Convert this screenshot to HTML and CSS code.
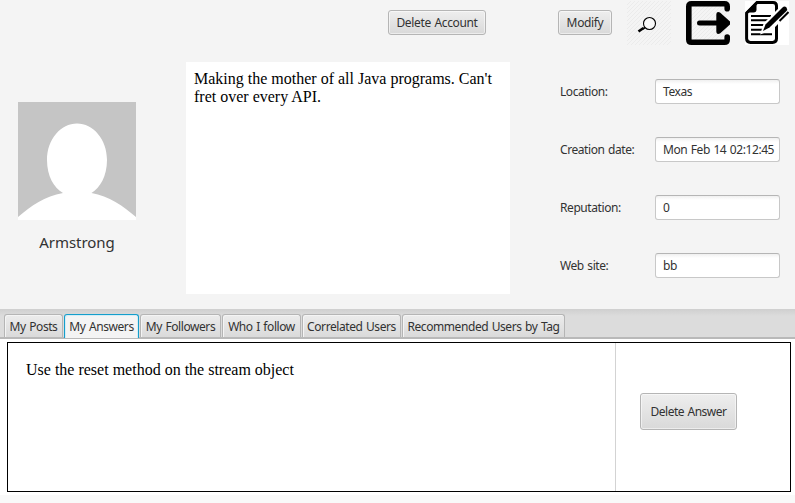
FILE: index.html
```html
<!DOCTYPE html>
<html lang="en">
<head>
<meta charset="utf-8">
<title>Profile</title>
<link rel="stylesheet" href="styles.css">
</head>
<body>
<header class="toolbar">
  <button class="btn delete-account"><span>Delete Account</span></button>
  <button class="btn modify"><span>Modify</span></button>
  <div class="icons">
    <svg class="icon" viewBox="0 0 44 44">
      <defs><pattern id="hatch" width="4" height="4" patternUnits="userSpaceOnUse"><path d="M-1 5L5-1" stroke="#ebebeb" stroke-width="1"/></pattern></defs>
      <rect width="44" height="44" fill="url(#hatch)"/>
      <circle cx="22.5" cy="22.5" r="6" fill="#f8f8f8" stroke="#000" stroke-width="1.1"/>
      <path d="M18 26.500L16 28" stroke="#000" stroke-width="1.6"/>
      <path d="M16.500 27L11.500 30.500" stroke="#000" stroke-width="2.600"/>
    </svg>
    <svg class="icon" viewBox="0 0 44 44">
      <rect x="3" y="3" width="38" height="38" fill="url(#hatch)"/>
      <path d="M41.200 7.800V5.500Q41.200 2.800 38.500 2.800H5.500Q2.800 2.800 2.800 5.500V38.500Q2.800 41.200 5.500 41.200H38.500Q41.200 41.200 41.200 38.500V36" fill="none" stroke="#000" stroke-width="5.600" stroke-linecap="round"/>
      <path d="M13.500 22H33" stroke="#000" stroke-width="5" stroke-linecap="round"/>
      <path d="M30.300 14Q30.300 9.800 34 11.500L44 20.500V23.500L34 32.500Q30.300 34.200 30.300 30Z"/>
    </svg>
    <svg class="icon" viewBox="0 0 44 44">
      <rect width="44" height="44" fill="#fff"/>
      <path d="M12 1.500H28Q31.500 1.500 31.500 5V37.500Q31.500 41.400 27.500 41.400H5.500Q1.600 41.400 1.600 37.500V12Z" fill="#fff" stroke="#000" stroke-width="3"/>
      <path d="M.5 11.500L11.500 .5V8.500Q11.500 11.500 8.500 11.500Z"/>
      <path d="M6 15H26M6 19.300H24M6 24H20M6 28.700H19M6 33.300H27" stroke="#000" stroke-width="1.900"/>
      <path d="M17.500 31L20 23L37 6L43 11L26 28Z" fill="#fff" stroke="#fff" stroke-width="3"/>
      <path d="M18 30L20.500 23.500L37.500 6.500Q39.500 4.500 41.500 6.500Q43 8.500 41 10.500L24.500 26.500Z"/>
      <path d="M34.500 20L43.500 11" stroke="#000" stroke-width="2"/>
    </svg>
  </div>
</header>
<main class="profile">
  <section class="identity">
    <svg class="avatar" viewBox="0 0 118 118">
      <rect width="118" height="118" fill="#c5c5c5"/>
      <path d="M59 21.500C75 21.500 89 37 89 58C89 74 82 86 73.500 91C91 94 105 104 118 115V118H0V115C13 104 27 94 45 91C36 86 29 74 29 58C29 37 43 21.500 59 21.500Z" fill="#fff"/>
    </svg>
    <div class="name"><span>Armstrong</span></div>
  </section>
  <section class="about">Making the mother of all Java programs. Can't fret over every API.</section>
  <section class="details">
    <label>Location:</label><div class="field">Texas</div>
    <label>Creation date:</label><div class="field date">Mon Feb 14 02:12:45</div>
    <label>Reputation:</label><div class="field">0</div>
    <label>Web site:</label><div class="field">bb</div>
  </section>
</main>
<nav class="tabs">
  <div class="tab t1"><span>My Posts</span></div>
  <div class="tab t2 active"><span>My Answers</span></div>
  <div class="tab t3"><span>My Followers</span></div>
  <div class="tab t4"><span>Who I follow</span></div>
  <div class="tab t5"><span>Correlated Users</span></div>
  <div class="tab t6"><span>Recommended Users by Tag</span></div>
</nav>
<section class="panel">
  <article class="answer">
    <p class="text">Use the reset method on the stream object</p>
    <div class="actions"><button class="btn delete-answer"><span>Delete Answer</span></button></div>
  </article>
</section>
</body>
</html>
```
FILE: styles.css
```css
* { box-sizing: border-box; }
body {
  margin: 0;
  width: 795px;
  height: 503px;
  overflow: hidden;
  background: #f9f9f9;
  color: #323232;
  font: 12px/16px "Noto Sans", "Open Sans", sans-serif;
  letter-spacing: -0.42px;
  word-spacing: 0.8px;
  white-space: nowrap;
}
.toolbar {
  display: flex;
  height: 62px;
  padding-left: 388px;
  background: #f4f4f4;
}
.btn {
  display: flex;
  align-items: center;
  justify-content: center;
  height: 25px;
  padding: 0;
  border: 1px solid #b5b5b5;
  border-radius: 3px;
  background: linear-gradient(#eeeeee, #d9d9d9);
  box-shadow: inset 0 0 0 1px rgba(255, 255, 255, 0.5);
  color: #323232;
  font: inherit;
  letter-spacing: -0.35px;
  word-spacing: inherit;
}
.toolbar .btn { margin-top: 10px; }
.delete-account { width: 98px; }
.modify { width: 54px; margin-left: 72px; }
.icons { display: flex; gap: 15px; margin: 1px 0 0 15px; }
.icon { width: 44px; height: 44px; }
.profile {
  display: grid;
  grid-template-columns: 186px 324px 1fr;
  height: 247px;
  background: #f4f4f4;
}
.identity { padding: 40px 0 0 18px; }
.avatar { display: block; width: 118px; height: 118px; }
.name {
  width: 118px;
  margin-top: 11px;
  text-align: center;
  font-size: 15px;
  line-height: 22px;
  letter-spacing: -0.05px;
}
.about {
  height: 232px;
  padding: 8px;
  background: #fff;
  color: #000;
  font: 16px/18px "Liberation Serif", serif;
  letter-spacing: 0;
  word-spacing: 0;
  white-space: normal;
}
.details {
  display: grid;
  grid-template-columns: 95px 125px;
  grid-auto-rows: 25px;
  row-gap: 33px;
  align-items: center;
  padding: 17px 0 0 50px;
}
.field {
  height: 25px;
  padding-left: 7px;
  border: 1px solid #c8c8c8;
  border-top-color: #b5b5b5;
  border-radius: 3px;
  background: linear-gradient(#f0f0f0, #fff 4px);
  line-height: 23px;
}
.tabs {
  display: flex;
  align-items: flex-end;
  gap: 1px;
  height: 30px;
  padding-left: 4px;
  border-bottom: 2px solid #b9b9b9;
  background: linear-gradient(#cfcfcf, #dcdcdc 7px, #dcdcdc);
}
.tab {
  display: flex;
  justify-content: center;
  height: 23px;
  border: 1px solid #b5b5b5;
  border-bottom: 0;
  border-radius: 3px 3px 0 0;
  background: linear-gradient(#ececec, #dadada);
  box-shadow: inset 1px 1px 0 #f4f4f4;
  line-height: 24px;
}
.tab.active {
  height: 24px;
  margin-bottom: -1px;
  border-color: #159ecb;
  background: #f4f4f4;
  box-shadow: inset 1px 1px 0 #d4edf6, inset -1px 0 0 #d4edf6;
}
.t1 { width: 59px; }
.t2 { width: 75px; }
.t3 { width: 81px; }
.t4 { width: 79px; }
.t5 { width: 99px; }
.t6 { width: 163px; }
.panel {
  height: 156px;
  padding: 3px 4px 3px 7px;
  background: #fff;
}
.answer {
  display: grid;
  grid-template-columns: 608px 1fr;
  height: 150px;
  border: 1px solid #000;
}
.text {
  margin: 0;
  padding: 18px;
  border-right: 1px solid #d3d3d3;
  color: #000;
  font: 16px/18px "Liberation Serif", serif;
  letter-spacing: 0;
  word-spacing: 0;
}
.actions { padding: 50px 0 0 24px; }
.delete-answer { width: 97px; height: 37px; letter-spacing: -0.5px; }
```
